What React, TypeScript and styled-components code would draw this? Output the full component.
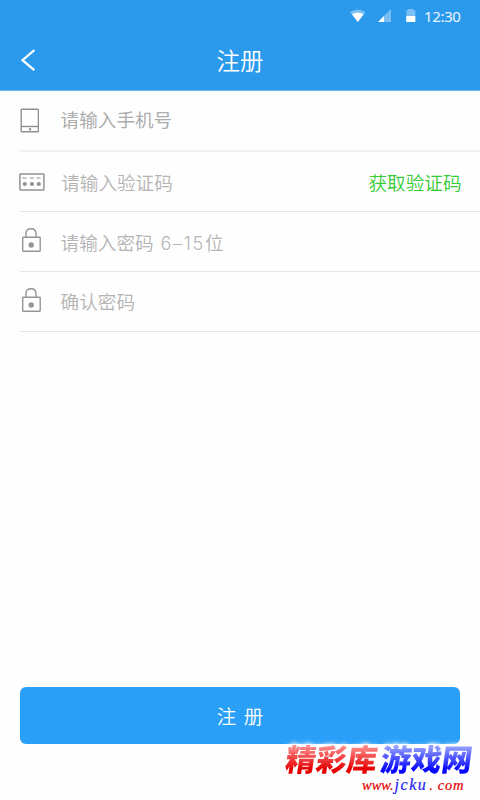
import React from 'react';
import styled, { createGlobalStyle } from 'styled-components';

const Global = createGlobalStyle`
  * { box-sizing: border-box; }
  body { margin: 0; background: #fff; }
`;

const Screen = styled.main`
  position: relative;
  width: 480px;
  height: 800px;
  overflow: hidden;
  display: flex;
  flex-direction: column;
  background: #fefefe;
  font-family: 'Noto Sans CJK SC', sans-serif;
`;

const Header = styled.header`
  height: 91px;
  flex: none;
  background: #2b9aed;
  border-bottom: 1px solid #67b6f2;
  color: #fff;
`;

const StatusBar = styled.div`
  height: 30px;
  display: flex;
  align-items: center;
  padding: 1px 0 0 350px;
`;

const StatusIcons = styled.svg`
  display: block;
  width: 66px;
  height: 16px;
`;

const Clock = styled.span`
  margin-left: 8px;
  font: 15px/20px 'Noto Sans', sans-serif;
  letter-spacing: -0.35px;
  color: #eaf5fe;
`;

const NavBar = styled.div`
  height: 59px;
  display: grid;
  grid-template-columns: 60px 1fr 60px;
  align-items: center;
`;

const BackButton = styled.button`
  width: 60px;
  height: 59px;
  padding: 0 0 0 20px;
  border: 0;
  background: none;
  display: flex;
  align-items: center;
`;

const Title = styled.h1`
  margin: 0;
  text-align: center;
  font-size: 23.5px;
  line-height: 36px;
  font-weight: 350;
`;

const Form = styled.form`
  flex: 1;
  padding-left: 19px;
`;

const Row = styled.label<{ $height?: number; $thick?: boolean }>`
  height: ${(p) => p.$height ?? 60}px;
  margin-left: 1px;
  display: flex;
  align-items: center;
  border-bottom: ${(p) => (p.$thick ? '2px solid #f0f0f0' : '1px solid #e5e5e5')};
`;

const IconSlot = styled.span<{ $lift?: number }>`
  width: 41px;
  margin-left: -1px;
  padding-bottom: ${(p) => (p.$lift ?? 0) * 2}px;
  display: flex;
`;

const Hint = styled.span<{ $color?: string; $weight?: number; $inset?: number; $lift?: number }>`
  flex: 1;
  padding: 0 0 ${(p) => p.$lift ?? 0}px ${(p) => p.$inset ?? 0.6}px;
  font-size: 18.6px;
  line-height: 28px;
  white-space: pre;
  font-weight: ${(p) => p.$weight ?? 350};
  color: ${(p) => p.$color ?? '#b4b4b4'};
`;

const Digits = styled.span`
  display: inline-block;
  font-family: Inter, 'Liberation Sans', sans-serif;
  font-weight: 300;
  font-size: 18px;
  line-height: 20px;
  letter-spacing: 1.75px;
`;

const CodeLink = styled.span`
  padding: 1px 18.5px 0 0;
  font-size: 18.6px;
  line-height: 28px;
  font-weight: 350;
  color: #35cb35;
`;

const Submit = styled.button`
  flex: none;
  width: 440px;
  height: 57px;
  margin: 0 20px 56px;
  padding: 0;
  border: 0;
  border-radius: 6px;
  background: #2a9ff7;
  color: #fff;
  font: 350 19.5px/28px 'Noto Sans CJK SC', sans-serif;
  word-spacing: 3px;
`;

const Watermark = styled.aside`
  position: absolute;
  left: 286px;
  top: 738px;
  width: 194px;
  height: 62px;
`;

const Brand = styled.div`
  display: flex;
  gap: 4px;
  height: 41px;
  filter: drop-shadow(0 0 1px #fff) drop-shadow(0 0 2px #fff) drop-shadow(0 0 2px #fff);
`;

const BrandWord = styled.span<{ $from: string; $to: string }>`
  display: block;
  width: 91px;
  font-size: 30.5px;
  line-height: 41px;
  font-weight: 900;
  white-space: nowrap;
  transform: skewX(-8deg);
  color: transparent;
  background: linear-gradient(${(p) => p.$from} 20%, ${(p) => p.$to} 76%);
  background-clip: text;
`;

const Site = styled.div`
  padding-left: 76px;
  margin-top: -4px;
  font: italic 14.5px/20px 'Liberation Serif', serif;
  color: #e40000;
  display: flex;
  -webkit-text-stroke: 0.2px currentColor;
`;

const SiteName = styled.span`
  padding: 0 2px 0 1px;
  letter-spacing: 1.5px;
  font-size: 16px;
  color: #2525ee;
`;

const Domain = styled.span`
  padding-left: 5px;
  letter-spacing: 0.7px;
`;

const PhoneIcon = () => (
  <svg width="20" height="25" viewBox="0 0 20 25" fill="none" stroke="#8f8f8f" strokeWidth="1.4">
    <rect x="2.2" y="1.2" width="17.2" height="22.6" rx="1" />
    <path d="M2 18.5h17" />
    <circle cx="11" cy="21.2" r="1.2" fill="#8f8f8f" stroke="none" />
  </svg>
);

const CodeIcon = () => (
  <svg width="26" height="18" viewBox="0 0 26 18">
    <rect x="0.9" y="0.9" width="24" height="16" rx="0.6" fill="none" stroke="#929292" strokeWidth="1.5" />
    <path d="M3.5 5h4M10.8 5h4M17.6 5h4" stroke="#929292" strokeWidth="1.2" />
    <g fill="#929292">
      <circle cx="5.8" cy="11" r="2.1" />
      <circle cx="13" cy="11" r="2.1" />
      <circle cx="19.8" cy="11" r="2.1" />
    </g>
  </svg>
);

const LockIcon = () => (
  <svg width="24" height="26" viewBox="0 0 24 26" fill="none" stroke="#959595" strokeWidth="1.4">
    <path d="M7 10V6.7C7 3.5 9 1.7 12 1.7s5 1.8 5 5V10" />
    <rect x="3.7" y="10.2" width="17.5" height="14" rx="0.6" />
    <circle cx="12.2" cy="18" r="2.7" fill="#959595" stroke="none" />
  </svg>
);

export default function App() {
  return (
    <Screen>
      <Global />
      <Header>
        <StatusBar>
          <StatusIcons viewBox="0 0 66 16">
            <path d="M0 4Q7.8-1 15.6 4L7.8 14Z" fill="#79bff4" />
            <path d="M2 6.2Q7.8 2.8 13.6 6.2L7.8 14Z" fill="#fff" />
            <path d="M28 14 41 1V14Z" fill="#79bff4" />
            <path d="M28 14 34 8V14Z" fill="#fff" />
            <path d="M56.3 3q0-1 1-1H58V1h5v1h1.3q1 0 1 1v11h-9Z" fill="#79bff4" />
            <path d="M56.3 8h9v6h-9Z" fill="#fff" />
          </StatusIcons>
          <Clock>12:30</Clock>
        </StatusBar>
        <NavBar>
          <BackButton type="button" aria-label="返回">
            <svg width="16" height="22" viewBox="0 0 16 22" fill="none" stroke="#fff" strokeWidth="2.2">
              <path d="M14.3 1.2 2.5 11.2l11.8 10" />
            </svg>
          </BackButton>
          <Title>注册</Title>
        </NavBar>
      </Header>
      <Form>
        <Row $height={61} $thick>
          <IconSlot><PhoneIcon /></IconSlot>
          <Hint $weight={400} $color="#adadad" $lift={3}>请输入手机号</Hint>
        </Row>
        <Row>
          <IconSlot><CodeIcon /></IconSlot>
          <Hint $inset={1.2}>请输入验证码</Hint>
          <CodeLink>获取验证码</CodeLink>
        </Row>
        <Row>
          <IconSlot $lift={2}><LockIcon /></IconSlot>
          <Hint>请输入密码<Digits> 6–15</Digits>位</Hint>
        </Row>
        <Row>
          <IconSlot $lift={2}><LockIcon /></IconSlot>
          <Hint $lift={1}>确认密码</Hint>
        </Row>
      </Form>
      <Submit type="button">注 册</Submit>
      <Watermark>
        <Brand>
          <BrandWord $from="#ff8d8d" $to="#e60000">精彩库</BrandWord>
          <BrandWord $from="#98a4ff" $to="#0808ff">游戏网</BrandWord>
        </Brand>
        <Site>www.<SiteName>jcku</SiteName>.<Domain>com</Domain></Site>
      </Watermark>
    </Screen>
  );
}
